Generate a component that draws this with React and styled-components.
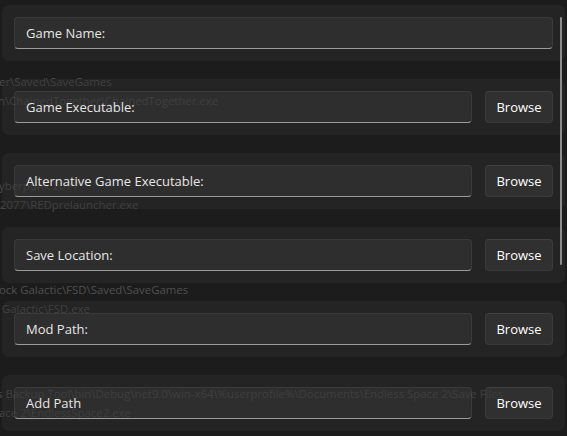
import React from "react";
import styled, { createGlobalStyle } from "styled-components";

const GlobalStyle = createGlobalStyle`
  html, body {
    margin: 0;
    padding: 0;
    background: #1c1c1c;
  }
  body {
    font-family: "Segoe UI", "Open Sans", "Noto Sans", sans-serif;
    font-size: 13px;
    color: #ffffff;
  }
`;

const Page = styled.div`
  position: relative;
  width: 567px;
  height: 436px;
  overflow: hidden;
`;

const GhostList = styled.div`
  position: absolute;
  inset: 0;
  padding-top: 72px;
  display: flex;
  flex-direction: column;
  gap: 66px;
  pointer-events: none;
`;

const GhostItem = styled.div`
  display: flex;
  flex-direction: column;
`;

const GhostLine = styled.div`
  height: 19px;
  line-height: 19px;
  font-size: 11.4px;
  white-space: nowrap;
  color: #4f4f4f;
  margin-left: ${(p) => p.shift || 0}px;
`;

const Form = styled.div`
  position: relative;
  display: flex;
  flex-direction: column;
  gap: 18px;
  padding: 5px 2px 0 2px;
`;

const Card = styled.div`
  display: flex;
  align-items: center;
  gap: 13px;
  height: 56px;
  box-sizing: border-box;
  padding: 12px;
  border-radius: 7px;
  background: rgba(46, 46, 46, 0.45);
`;

const TextBox = styled.div`
  flex: 1;
  height: 32px;
  box-sizing: border-box;
  display: flex;
  align-items: center;
  padding: 0 11px;
  border-radius: 4px;
  background: rgba(60, 60, 60, 0.45);
  border: 1px solid rgba(255, 255, 255, 0.06);
  border-bottom: 1px solid #9a9a9a;
  color: #e6e6e6;
  white-space: nowrap;
`;

const BrowseButton = styled.button`
  width: 68px;
  height: 32px;
  box-sizing: border-box;
  border-radius: 4px;
  border: 1px solid rgba(255, 255, 255, 0.05);
  border-top-color: rgba(255, 255, 255, 0.08);
  background: rgba(58, 58, 58, 0.55);
  color: #ffffff;
  font-family: inherit;
  font-size: 13px;
  padding: 0;
`;

const ScrollThumb = styled.div`
  position: absolute;
  top: 17px;
  left: 560px;
  width: 2px;
  height: 248px;
  border-radius: 1px;
  background: #8c8c8c;
`;

const ghosts = [
  ["er\\Saved\\SaveGames", -1, "n\\ChainedTogether\\ChainedTogether.exe", -2],
  ["yberpunk 2077", -1, "2077\\REDprelauncher.exe", 0],
  ["ock Galactic\\FSD\\Saved\\SaveGames", -1, "Galactic\\FSD.exe", 2],
  [
    "s Backup Tool\\bin\\Debug\\net9.0\\win-x64\\%userprofile%\\Documents\\Endless Space 2\\Save Files",
    -3,
    "ace 2\\EndlessSpace2.exe",
    -1,
  ],
];

const fields = [
  { label: "Game Name:", browse: false },
  { label: "Game Executable:", browse: true },
  { label: "Alternative Game Executable:", browse: true },
  { label: "Save Location:", browse: true },
  { label: "Mod Path:", browse: true },
  { label: "Add Path", browse: true },
];

export default function App() {
  return (
    <Page>
      <GlobalStyle />
      <GhostList>
        {ghosts.map(([save, s1, exe, s2]) => (
          <GhostItem key={save}>
            <GhostLine shift={s1}>{save}</GhostLine>
            <GhostLine shift={s2}>{exe}</GhostLine>
          </GhostItem>
        ))}
      </GhostList>
      <Form>
        {fields.map((f) => (
          <Card key={f.label}>
            <TextBox>{f.label}</TextBox>
            {f.browse && <BrowseButton>Browse</BrowseButton>}
          </Card>
        ))}
      </Form>
      <ScrollThumb />
    </Page>
  );
}
